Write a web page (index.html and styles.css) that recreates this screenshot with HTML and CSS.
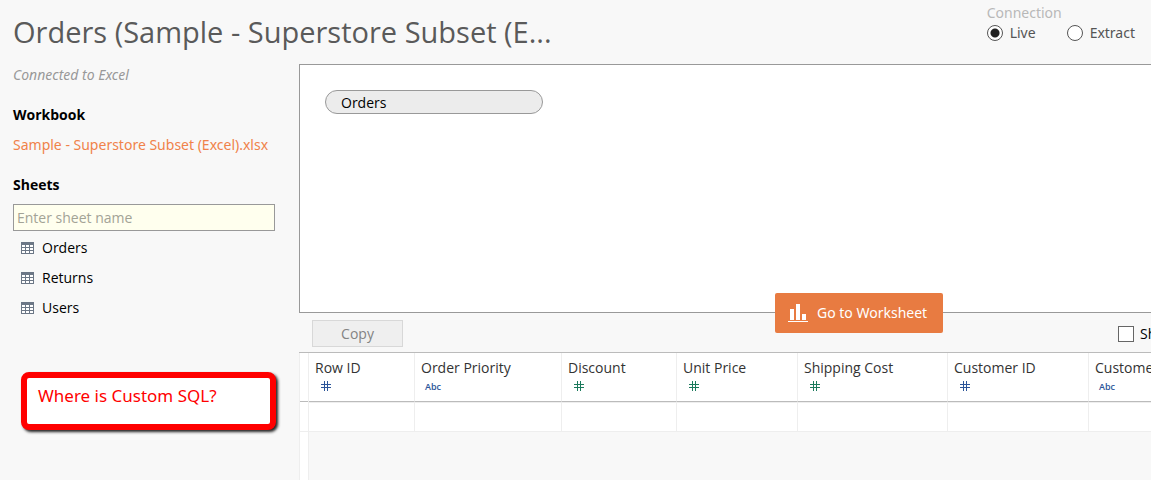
FILE: index.html
```html
<!DOCTYPE html>
<html lang="en">
<head>
    <meta charset="UTF-8">
    <title>Orders</title>
    <link rel="stylesheet" href="styles.css">
</head>
<body>
<svg class="defs" width="0" height="0">
    <symbol id="sheet" viewBox="0 0 13 12">
        <path fill="#fff" d="M0 0h13v12H0z"/>
        <path fill="#6c7786" d="M0 0h13v3H0zM0 3h1v9H0zM4 3h1v9H4zM8 3h1v9H8zM12 3h1v9h-1zM0 5h13v1H0zM0 8h13v1H0zM0 11h13v1H0z"/>
    </symbol>
    <symbol id="number" viewBox="0 0 10 10">
        <path fill="currentColor" d="M3 0h1v10H3zM6 0h1v10H6zM0 3h10v1H0zM0 6h10v1H0z"/>
    </symbol>
</svg>
<header class="header">
    <h1 class="title">Orders (Sample - Superstore Subset (E...</h1>
    <fieldset class="connection">
        <legend>Connection</legend>
        <div class="options">
            <label><input type="radio" name="connection" checked>Live</label>
            <label><input type="radio" name="connection">Extract</label>
        </div>
    </fieldset>
</header>
<div class="container">
    <aside class="sidebar">
        <p class="status">Connected to Excel</p>
        <h2>Workbook</h2>
        <a class="file" href="#">Sample - Superstore Subset (Excel).xlsx</a>
        <h2><label for="sheet-name">Sheets</label></h2>
        <input class="search" id="sheet-name" type="text" placeholder="Enter sheet name">
        <ul class="sheets">
            <li><svg width="13" height="12"><use href="#sheet"/></svg>Orders</li>
            <li><svg width="13" height="12"><use href="#sheet"/></svg>Returns</li>
            <li><svg width="13" height="12"><use href="#sheet"/></svg>Users</li>
        </ul>
        <div class="note">Where is Custom SQL?</div>
    </aside>
    <main class="main">
        <section class="canvas">
            <div class="pill">Orders</div>
            <button class="go" type="button">
                <svg width="20" height="18" viewBox="0 0 20 18"><path fill="#fff" d="M2 5h4v11H2zM8 0h4v16H8zM14 10h4v6h-4zM0 17h20v1H0z"/></svg>
                Go to Worksheet
            </button>
        </section>
        <div class="toolbar">
            <button class="copy" type="button" disabled>Copy</button>
            <label class="show"><input type="checkbox">Sh</label>
        </div>
        <div class="grid">
            <div class="gutter"></div>
            <table>
                <colgroup>
                    <col class="w-id">
                    <col class="w-priority">
                    <col class="w-discount">
                    <col class="w-price">
                    <col class="w-cost">
                    <col class="w-customer">
                    <col class="w-customer">
                </colgroup>
                <thead>
                    <tr>
                        <th>Row ID<svg class="type dim" width="10" height="10"><use href="#number"/></svg></th>
                        <th>Order Priority<span class="type abc">Abc</span></th>
                        <th>Discount<svg class="type" width="10" height="10"><use href="#number"/></svg></th>
                        <th>Unit Price<svg class="type" width="10" height="10"><use href="#number"/></svg></th>
                        <th>Shipping Cost<svg class="type" width="10" height="10"><use href="#number"/></svg></th>
                        <th>Customer ID<svg class="type dim" width="10" height="10"><use href="#number"/></svg></th>
                        <th>Customer<span class="type abc">Abc</span></th>
                    </tr>
                </thead>
                <tbody>
                    <tr><td></td><td></td><td></td><td></td><td></td><td></td><td></td></tr>
                </tbody>
            </table>
        </div>
    </main>
</div>
</body>
</html>
```

FILE: styles.css
```css
*, *::before, *::after{
    margin: 0;
    padding: 0;
    box-sizing: border-box;
}
body{
    display: flex;
    flex-direction: column;
    height: 100vh;
    overflow: hidden;
    background-color: #f8f8f8;
    color: #000;
    font: 14px/20px "Open Sans", "Noto Sans", sans-serif;
}
button, input{
    font: inherit;
}
svg{
    display: block;
    flex: none;
}
li{
    list-style: none;
}
.defs{
    position: absolute;
}
.header{
    display: flex;
    justify-content: space-between;
    height: 64px;
    padding: 3px 16px 0 13px;
}
.status, .file, .go, .note, .connection{
    font-family: "Noto Sans", "Open Sans", sans-serif;
}
.title{
    padding-top: 9px;
    color: #5a5a5a;
    font-size: 29px;
    font-weight: 400;
    line-height: 40px;
    white-space: nowrap;
}
.connection{
    border: 0;
    color: #555;
}
.connection legend{
    color: #b8b8b8;
}
.options{
    display: flex;
    gap: 31px;
}
.options label, .show{
    display: flex;
    align-items: center;
    gap: 7px;
}
.options input{
    appearance: none;
    width: 16px;
    height: 16px;
    border: 1px solid #555;
    border-radius: 50%;
    background-color: #fff;
}
.options input:checked{
    background-image: radial-gradient(circle, #222 4px, transparent 5px);
}
.container{
    display: flex;
    flex: 1;
    min-height: 0;
}
.sidebar{
    flex: none;
    width: 299px;
    padding: 1px 24px 0 13px;
}
.sidebar h2{
    margin-top: 20px;
    font-size: 14px;
    font-weight: 700;
    line-height: 20px;
}
.status{
    color: #999;
    font-style: italic;
}
.file{
    display: block;
    margin-top: 10px;
    color: #f0824a;
    text-decoration: none;
    white-space: nowrap;
}
.search{
    display: block;
    width: 100%;
    height: 27px;
    margin-top: 9px;
    padding: 0 3px;
    border: 1px solid #999;
    background-color: #ffffee;
}
.search::placeholder{
    color: #a3a396;
}
.sheets{
    padding: 2px 0 0 8px;
}
.sheets li{
    display: flex;
    align-items: center;
    gap: 8px;
    height: 30px;
}
.note{
    height: 58px;
    margin: 49px -1px 0 8px;
    padding: 8px 11px;
    border: 6px solid #f00;
    border-radius: 8px;
    background-color: #fff;
    box-shadow: 2px 2px 3px #222;
    color: #f00;
    font-size: 17px;
}
.main{
    display: flex;
    flex: 1;
    flex-direction: column;
    min-width: 0;
}
.canvas{
    position: relative;
    height: 249px;
    padding: 25px;
    border: 1px solid #999;
    border-right: 0;
    background-color: #fff;
}
.pill{
    width: 218px;
    height: 24px;
    padding-left: 15px;
    border: 1px solid #999;
    border-radius: 12px;
    background-color: #ececec;
    line-height: 24px;
}
/* sits across the lower edge of the canvas */
.go{
    position: absolute;
    right: 208px;
    bottom: -21px;
    display: flex;
    align-items: center;
    gap: 9px;
    width: 168px;
    height: 40px;
    padding: 0 13px;
    border: 0;
    border-radius: 2px;
    background-color: #e87b41;
    color: #fff;
    white-space: nowrap;
}
.toolbar{
    display: flex;
    align-items: center;
    justify-content: space-between;
    height: 39px;
    padding: 2px 0 0 13px;
}
.copy{
    width: 91px;
    height: 27px;
    border: 1px solid #d8d8d8;
    background-color: #efefef;
    color: #838383;
}
.show{
    width: 33px;
    gap: 6px;
    overflow: hidden;
}
.show input{
    appearance: none;
    flex: none;
    width: 16px;
    height: 16px;
    border: 1px solid #666;
    background-color: #fff;
}
.grid{
    display: flex;
    flex: 1;
    overflow: hidden;
    border-top: 1px solid #bbb;
}
.gutter{
    flex: none;
    width: 10px;
    border: solid #eee;
    border-width: 0 1px;
    background-color: #fff;
}
.gutter::before{
    content: "";
    display: block;
    height: 49px;
    border-bottom: 1px solid #bbb;
}
.gutter::after{
    content: "";
    display: block;
    height: 30px;
    border-bottom: 1px solid #eee;
}
table{
    flex: none;
    align-self: flex-start;
    width: 920px;
    table-layout: fixed;
    border-collapse: separate;
    border-spacing: 0;
    background-color: #fff;
}
.w-id{
    width: 106px;
}
.w-priority{
    width: 147px;
}
.w-discount{
    width: 115px;
}
.w-price{
    width: 121px;
}
.w-cost{
    width: 150px;
}
.w-customer{
    width: 141px;
}
th, td{
    border-right: 1px solid #eee;
}
th{
    height: 49px;
    padding: 5px 0 0 6px;
    border-bottom: 1px solid #bbb;
    color: #333;
    font-weight: 400;
    text-align: left;
    vertical-align: top;
    white-space: nowrap;
}
td{
    height: 30px;
    border-top: 1px solid #eee;
    border-bottom: 1px solid #eee;
}
.type{
    margin: 3px 0 0 6px;
    color: #1b7a5c;
}
.dim{
    color: #2c5599;
}
.abc{
    display: block;
    margin: 3px 0 0 4px;
    color: #2c5599;
    font-size: 9px;
    font-weight: 600;
    line-height: 12px;
}
```
